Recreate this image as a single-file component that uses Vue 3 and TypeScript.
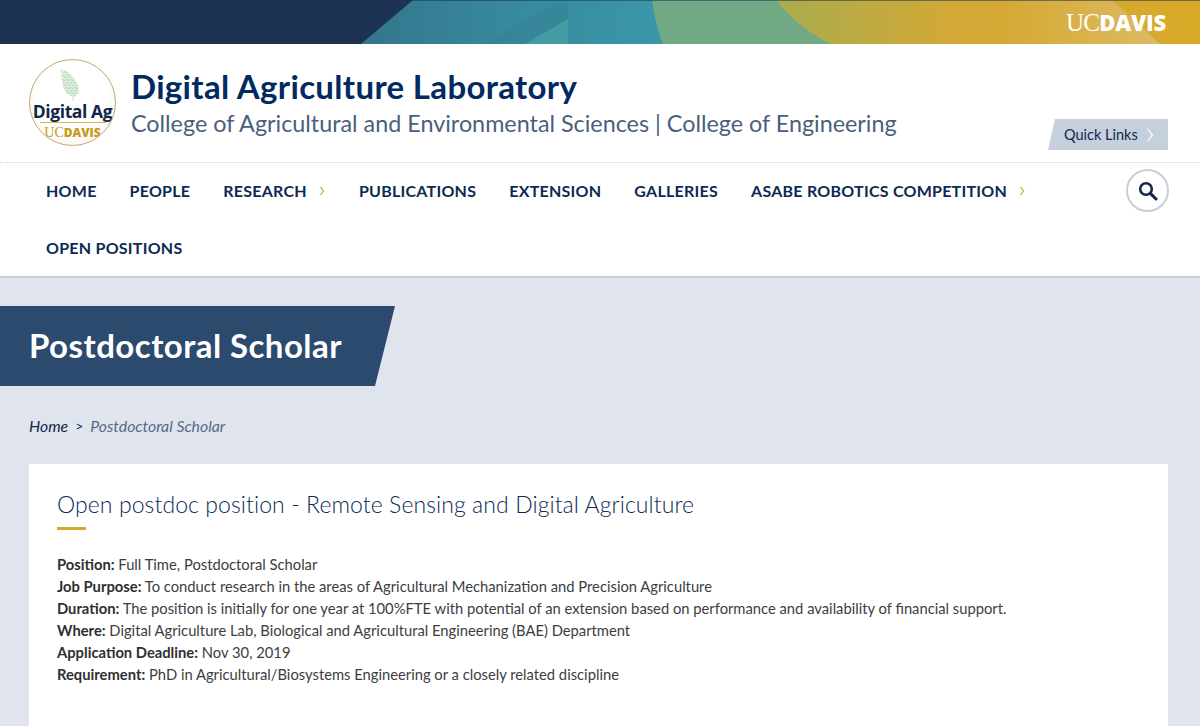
<script setup lang="ts">
interface NavItem { label: string; sub?: boolean }
const navItems: NavItem[] = [
  { label: 'HOME' },
  { label: 'PEOPLE' },
  { label: 'RESEARCH', sub: true },
  { label: 'PUBLICATIONS' },
  { label: 'EXTENSION' },
  { label: 'GALLERIES' },
  { label: 'ASABE ROBOTICS COMPETITION', sub: true },
  { label: 'OPEN POSITIONS' },
]
const details: [string, string][] = [
  ['Position:', 'Full Time, Postdoctoral Scholar'],
  ['Job Purpose:', 'To conduct research in the areas of Agricultural Mechanization and Precision Agriculture'],
  ['Duration:', 'The position is initially for one year at 100%FTE with potential of an extension based on performance and availability of financial support.'],
  ['Where:', 'Digital Agriculture Lab, Biological and Agricultural Engineering (BAE) Department'],
  ['Application Deadline:', 'Nov 30, 2019'],
  ['Requirement:', 'PhD in Agricultural/Biosystems Engineering or a closely related discipline'],
]
const leafDots: { x: number; y: number }[] = []
for (let r = 0; r < 17; r++) {
  const half = [1, 2, 3, 4, 4, 5, 6, 6, 6, 7, 7, 7, 6, 6, 5, 3, 1][r]
  const c = 8 + r * 0.7
  for (let i = -half; i <= half; i += 1) {
    if ((r * 3 + i * 5) % 4 !== 0) leafDots.push({ x: c + i * 1.3, y: 5 + r * 2 })
  }
}
</script>

<template>
  <div class="page">
    <div class="topbar">
      <svg class="topbar-art" viewBox="0 0 1200 44" preserveAspectRatio="none" aria-hidden="true">
        <defs>
          <linearGradient id="teal" x1="0" x2="1" y1="0" y2="0">
            <stop offset="0" stop-color="#34758c" />
            <stop offset="0.5" stop-color="#378a9c" />
            <stop offset="1" stop-color="#3a98a9" />
          </linearGradient>
          <linearGradient id="gold" x1="0" x2="1" y1="0" y2="0">
            <stop offset="0" stop-color="#a9ac4e" />
            <stop offset="0.42" stop-color="#d3a836" />
            <stop offset="1" stop-color="#d9a928" />
          </linearGradient>
          <linearGradient id="sheen" x1="0" x2="1" y1="0" y2="0">
            <stop offset="0" stop-color="#dcbb68" stop-opacity="0" />
            <stop offset="1" stop-color="#dcbb68" stop-opacity="0.95" />
          </linearGradient>
        </defs>
        <rect width="1200" height="44" fill="#1d3354" />
        <polygon points="361,44 413,0 670,0 670,44" fill="url(#teal)" />
        <polygon points="483,44 556,4 568,4 568,44" fill="#357f94" opacity="0.5" />
        <polygon points="525,44 568,19 568,44" fill="#46a0a6" opacity="0.85" />
        <path d="M652,0 Q655,24 663,44 L840,44 L790,0 Z" fill="#70a983" />
        <path d="M776,0 Q798,28 831,44 L1200,44 L1200,0 Z" fill="url(#gold)" />
        <polygon points="1000,0 1112,0 1160,44 1000,44" fill="url(#sheen)" />
        <rect width="1200" height="1" fill="#1d3354" opacity="0.55" />
      </svg>
      <div class="ucd"><span class="uc">UC</span><span class="davis">DAVIS</span></div>
    </div>

    <header class="masthead">
      <div class="badge">
        <svg class="leaf" viewBox="0 0 30 42" aria-hidden="true">
          <path d="M1,1 C10,4 24,14 24,27 C24,34 20,37 17,37 C8,36 3,22 1,1 Z" fill="#e6f1e5" />
          <circle v-for="(d, i) in leafDots" :key="i" :cx="d.x" :cy="d.y" r="0.55" fill="#7fbb8c" />
          <path d="M17,37 L18,42" stroke="#a9c9ad" stroke-width="0.8" />
        </svg>
        <div class="badge-name">Digital Ag</div>
        <div class="badge-ucd"><span class="b-uc">UC</span><span class="b-davis">DAVIS</span></div>
      </div>
      <div class="titles">
        <div class="site-title">Digital Agriculture Laboratory</div>
        <div class="site-sub">College of Agricultural and Environmental Sciences | College of Engineering</div>
      </div>
      <a class="quick">Quick Links
        <svg class="quick-chev" viewBox="0 0 8 14" aria-hidden="true"><path d="M1.5,1 L6.5,7 L1.5,13" fill="none" stroke="#eef1f5" stroke-width="1.8" /></svg>
      </a>
    </header>

    <nav class="nav">
      <ul class="nav-list">
        <li v-for="item in navItems" :key="item.label" class="nav-item">
          {{ item.label }}
          <svg v-if="item.sub" class="nav-chev" viewBox="0 0 6 10" aria-hidden="true"><path d="M1.5,1 L4.5,5 L1.5,9" fill="none" stroke="#d8b452" stroke-width="1.3" /></svg>
        </li>
      </ul>
      <button class="search" aria-label="Search">
        <svg viewBox="0 0 20 20" width="20" height="20" aria-hidden="true">
          <circle cx="8" cy="8" r="5.8" fill="none" stroke="#13284c" stroke-width="2.6" />
          <path d="M12.4,12.4 L18,18" stroke="#13284c" stroke-width="3" stroke-linecap="round" />
        </svg>
      </button>
    </nav>

    <main class="main">
      <h1 class="banner">Postdoctoral Scholar</h1>
      <div class="crumbs"><span class="home">Home</span><span class="sep">&gt;</span><span class="cur">Postdoctoral Scholar</span></div>
      <section class="card">
        <h2 class="card-title">Open postdoc position - Remote Sensing and Digital Agriculture</h2>
        <div class="rule"></div>
        <p v-for="d in details" :key="d[0]" class="line"><strong>{{ d[0] }}</strong> {{ d[1] }}</p>
      </section>
    </main>
  </div>
</template>

<style>
html, body { margin: 0; padding: 0; overflow: hidden; background: #e0e5ed; }
</style>

<style scoped>
.page {
  height: 726px;
  overflow: hidden;
  display: flex;
  flex-direction: column;
  background: #e0e5ed;
  font-family: "Lato", "Liberation Sans", sans-serif;
}
.topbar {
  position: relative;
  height: 44px;
  flex: none;
  display: flex;
  justify-content: flex-end;
  align-items: center;
  padding-right: 34px;
}
.topbar-art { position: absolute; inset: 0; width: 100%; height: 44px; display: block; }
.ucd { position: relative; color: #fff; line-height: 1; white-space: nowrap; }
.uc { font-family: "Liberation Serif", serif; letter-spacing: -0.8px; font-size: 25px; }
.davis { font-family: "Open Sans", sans-serif; font-weight: 800; font-size: 22px; letter-spacing: -0.2px; }
.masthead {
  flex: none;
  height: 119px;
  box-sizing: border-box;
  background: #fff;
  border-bottom: 1px dotted #cfd3da;
  display: flex;
  align-items: flex-start;
  padding: 15px 32px 0 29px;
}
.badge {
  width: 85px;
  height: 85px;
  flex: none;
  border-radius: 50%;
  border: 1.5px solid #c6a868;
  background: radial-gradient(circle at 50% 45%, #fff 55%, #f3f0e6);
  display: flex;
  flex-direction: column;
  align-items: center;
  overflow: hidden;
  box-sizing: content-box;
}
.leaf { width: 24px; height: 38px; margin-top: 5px; margin-right: 3px; flex: none; }
.badge-name {
  font-family: "Open Sans", sans-serif;
  font-weight: 700;
  font-size: 17.5px;
  line-height: 19px;
  color: #10264a;
  letter-spacing: -0.4px;
  white-space: nowrap;
  margin-top: -1px;
}
.badge-ucd {
  margin-top: 1px;
  border-top: 1px solid #d3b65f;
  width: 66px;
  text-align: center;
  color: #c59a1e;
  line-height: 15px;
}
.b-uc { font-family: "Liberation Serif", serif; font-size: 14px; }
.b-davis { font-family: "Open Sans", sans-serif; font-weight: 800; font-size: 12px; }
.titles { margin-left: 15px; flex: 1; }
.site-title {
  color: #022a61;
  font-weight: 700;
  font-size: 33px;
  letter-spacing: 0.33px;
  line-height: 38px;
  margin-top: 8px;
  white-space: nowrap;
}
.site-sub {
  color: #4a5f7e;
  font-size: 23.35px;
  line-height: 28px;
  margin-top: 4px;
  white-space: nowrap;
}
.quick {
  align-self: flex-start;
  margin-top: 60px;
  height: 31px;
  width: 120px;
  flex: none;
  box-sizing: border-box;
  background: #c6cfdc;
  clip-path: polygon(7px 0, 100% 0, 100% 100%, 0 100%);
  color: #13284c;
  font-size: 14.5px;
  display: flex;
  align-items: center;
  padding-left: 16px;
  gap: 8px;
}
.quick-chev { width: 8px; height: 14px; }
.nav {
  flex: none;
  position: relative;
  height: 115px;
  box-sizing: border-box;
  background: #fff;
  border-bottom: 2px solid #c8cfda;
  padding: 0 31px 0 46px;
  display: flex;
  align-items: flex-start;
}
.nav-list {
  list-style: none;
  margin: -1px 0 0;
  padding: 0;
  flex: 1;
  display: flex;
  flex-wrap: wrap;
  column-gap: 33px;
}
.nav-item {
  height: 57px;
  display: flex;
  align-items: center;
  gap: 12px;
  color: #0c2a52;
  font-weight: 700;
  font-size: 16px;
  letter-spacing: 0.25px;
  white-space: nowrap;
}
.nav-chev { width: 6px; height: 10px; margin-right: 1px; }
.search {
  flex: none;
  width: 43px;
  height: 43px;
  margin-top: 6px;
  padding: 0;
  box-sizing: border-box;
  border: 2px solid #c8cfda;
  border-radius: 50%;
  background: #fff;
  display: flex;
  align-items: center;
  justify-content: center;
}
.main { flex: 1; min-height: 0; display: flex; flex-direction: column; padding-top: 28px; }
.banner {
  margin: 0;
  width: 395px;
  height: 80px;
  box-sizing: border-box;
  flex: none;
  background: #2c4a6e;
  clip-path: polygon(0 0, 100% 0, 375px 100%, 0 100%);
  color: #fff;
  font-size: 33px;
  letter-spacing: 0.45px;
  font-weight: 700;
  line-height: 78px;
  padding-left: 29px;
  white-space: nowrap;
}
.crumbs {
  margin: 31px 0 0 29px;
  height: 18px;
  line-height: 18px;
  font-size: 15.8px;
  font-style: italic;
  color: #13284c;
  display: flex;
  gap: 7px;
}
.sep { font-style: normal; font-size: 14px; }
.cur { color: #54698a; }
.card {
  flex: 1;
  margin: 29px 32px 0 29px;
  background: #fff;
  padding: 26px 28px 0;
}
.card-title {
  margin: 0;
  font-size: 23px;
  font-weight: 300;
  line-height: 28px;
  color: #0a2a5a;
  letter-spacing: 0.08px;
  white-space: nowrap;
}
.rule { width: 29px; height: 3px; background: #d0a92f; margin: 9px 0 23px; }
.line {
  margin: 0;
  font-size: 14.75px;
  line-height: 22px;
  color: #3d3d3f;
  white-space: nowrap;
}
.line strong { font-weight: 700; color: #2f2f31; }
</style>
